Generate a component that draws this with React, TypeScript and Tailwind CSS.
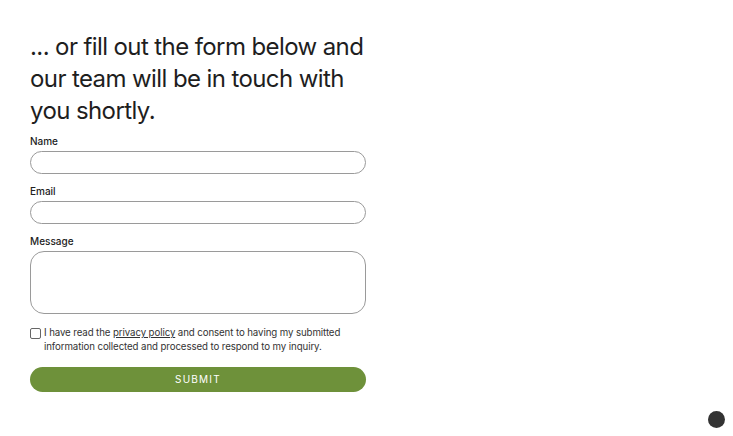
export default function App() {
  return (
    <div className="relative h-[436px] w-[733px] overflow-hidden bg-white font-['Inter',sans-serif] text-[#222]">
      <div className="box-content flex w-[336px] flex-col pl-[30px] pt-[31px]">
        <h2 className="whitespace-nowrap text-[24px] font-normal leading-[32px] tracking-[-0.6px] text-[#1e1e1e]">
          ... or fill out the form below and
          <br />
          our team will be in touch with
          <br />
          you shortly.
        </h2>

        <form className="mt-[7px] flex flex-col">
          <label className="text-[10px] font-medium leading-[14px] text-[#222]">Name</label>
          <input className="mt-[3px] h-[23px] w-full rounded-full border border-[#9a9a9a] px-3 text-[11px] outline-none" />

          <label className="mt-[10px] text-[10px] font-medium leading-[14px] text-[#222]">Email</label>
          <input className="mt-[3px] h-[23px] w-full rounded-full border border-[#9a9a9a] px-3 text-[11px] outline-none" />

          <label className="mt-[10px] text-[10px] font-medium leading-[14px] text-[#222]">Message</label>
          <textarea className="mt-[3px] h-[63px] w-full resize-none rounded-[14px] border border-[#9a9a9a] px-3 py-2 text-[11px] outline-none" />

          <div className="mt-[12px] flex items-start gap-[3px]">
            <span className="mt-[2px] h-[11px] w-[11px] shrink-0 rounded-[2px] border border-[#666]" />
            <p className="text-[9.7px] leading-[14px] tracking-[-0.1px] text-[#333]">
              I have read the <span className="underline">privacy policy</span> and consent to having my submitted information collected and processed to respond to my inquiry.
            </p>
          </div>

          <button
            type="button"
            className="mt-[13px] h-[25px] w-full rounded-full bg-[#6e913a] text-[10px] tracking-[1.2px] text-white"
          >
            SUBMIT
          </button>
        </form>
      </div>

      <div className="absolute left-[708px] top-[411px] h-[17px] w-[17px] rounded-full bg-[#333]" />
    </div>
  );
}
